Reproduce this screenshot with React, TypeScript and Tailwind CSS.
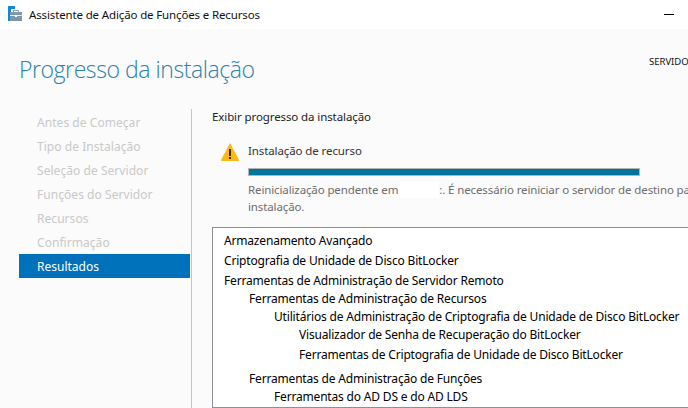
import React from "react";

const steps = ["Antes de Começar","Tipo de Instalação","Seleção de Servidor","Funções do Servidor","Recursos","Confirmação"];

function Row({ text, indent, h }: { text: string; indent: string; h: string }) {
  return <div className={`flex items-center whitespace-nowrap ${indent} ${h}`}>{text}</div>;
}

export default function App() {
  return (
    <div className="w-[688px] h-[408px] overflow-hidden flex flex-col bg-[#fbfbfb] font-['Noto_Sans','Open_Sans',sans-serif] text-[12px] text-[#111]">
      <div className="h-[29px] shrink-0 bg-white flex items-center pl-[8px]">
        <svg width="14" height="15" viewBox="0 0 14 15" className="shrink-0 mb-[2px]">
          <rect x="0" y="0" width="7" height="3" fill="#1287dc" />
          <rect x="0" y="0" width="3" height="15" fill="#1287dc" />
          <rect x="2" y="6" width="12" height="9" fill="#7d97a8" />
          <rect x="5.5" y="4.5" width="5" height="2" fill="none" stroke="#8ea3b1" strokeWidth="1" />
          <rect x="2" y="9" width="12" height="1" fill="#e4ebf0" />
          <rect x="7" y="9" width="2" height="2" fill="#ffffff" />
        </svg>
        <span className="ml-[7px] whitespace-nowrap text-[11.5px] tracking-[-0.14px] leading-none">Assistente de Adição de Funções e Recursos</span>
        <div className="ml-auto mr-[14px] w-[10px] h-px bg-black" />
      </div>
      <div className="flex h-[66px] shrink-0 pl-[19px]">
        <h1 className="text-[23px] font-light leading-none text-[#2a83aa] pt-[29px] whitespace-nowrap tracking-[-0.43px] font-['Open_Sans',sans-serif]">Progresso da instalação</h1>
        <span className="ml-auto text-[9.5px] whitespace-nowrap pt-[28px] w-[39px] overflow-hidden leading-none">SERVIDOR</span>
      </div>
      <div className="flex flex-1 min-h-0 pt-[14px]">
        <div className="w-[171px] ml-[19px] shrink-0 flex flex-col pt-[1px]">
          {steps.map((s) => (
            <div key={s} className="h-[24px] flex items-center pl-[18px] pt-[1px] text-[#c9c9c9] whitespace-nowrap tracking-[0.05px]">{s}</div>
          ))}
          <div className="h-[24px] flex items-center pl-[18px] pt-[1px] bg-[#0072bc] text-white">Resultados</div>
        </div>
        <div className="w-px ml-px bg-[#c6c6c6] shrink-0" />
        <div className="flex-1 min-w-0 pl-[20px] flex flex-col">
          <div className="h-[16px] flex items-center whitespace-nowrap text-[11.5px] text-[#222] tracking-[-0.1px]">Exibir progresso da instalação</div>
          <div className="flex pl-[9px] mt-[18px] h-[84px]">
            <svg width="18" height="18" viewBox="0 0 18 18" className="shrink-0">
              <path d="M9 0 L18 17 Q18 18 17 18 L1 18 Q0 18 0 17 Z" fill="#fcb813" />
              <rect x="8" y="6" width="2" height="7" fill="#3a2a00" />
              <rect x="8" y="14" width="2" height="2" fill="#3a2a00" />
            </svg>
            <div className="ml-[9px] w-[392px] shrink-0">
              <div className="h-[16px] flex items-center text-[11.5px] text-[#333] whitespace-nowrap tracking-[-0.1px]">Instalação de recurso</div>
              <div className="h-[8px] mt-[9px] border border-[#b4b4b4] bg-[#00749c]" />
              <div className="mt-[5px] w-[440px] text-[11.5px] text-[#6d6d6d] leading-[17px] whitespace-nowrap tracking-[-0.12px]">
                <div className="flex">
                  <span>Reinicialização pendente em</span>
                  <span className="w-[39px] ml-[2px] shrink-0 bg-white" />
                  <span>:.&nbsp;É necessário reiniciar o servidor de destino para concluir a</span>
                </div>
                <div>instalação.</div>
              </div>
            </div>
          </div>
          <div className="flex-1 border-l border-t border-b border-[#8f8f96] bg-white pl-[11px] pt-[2px] w-[490px] tracking-[-0.18px] text-black">
            <Row text="Armazenamento Avançado" indent="pt-[1px]" h="h-[20px]" />
            <Row text="Criptografia de Unidade de Disco BitLocker" indent="pt-[1px]" h="h-[20px]" />
            <Row text="Ferramentas de Administração de Servidor Remoto" indent="pt-[1px]" h="h-[20px]" />
            <Row text="Ferramentas de Administração de Recursos" indent="pl-[25px]" h="h-[18px]" />
            <Row text="Utilitários de Administração de Criptografia de Unidade de Disco BitLocker" indent="pl-[50px]" h="h-[18px]" />
            <Row text="Visualizador de Senha de Recuperação do BitLocker" indent="pl-[75px]" h="h-[18px]" />
            <Row text="Ferramentas de Criptografia de Unidade de Disco BitLocker" indent="pl-[75px]" h="h-[22px]" />
            <Row text="Ferramentas de Administração de Funções" indent="pl-[25px] mt-[3px]" h="h-[20px]" />
            <Row text="Ferramentas do AD DS e do AD LDS" indent="pl-[50px]" h="h-[16px]" />
          </div>
        </div>
      </div>
    </div>
  );
}
